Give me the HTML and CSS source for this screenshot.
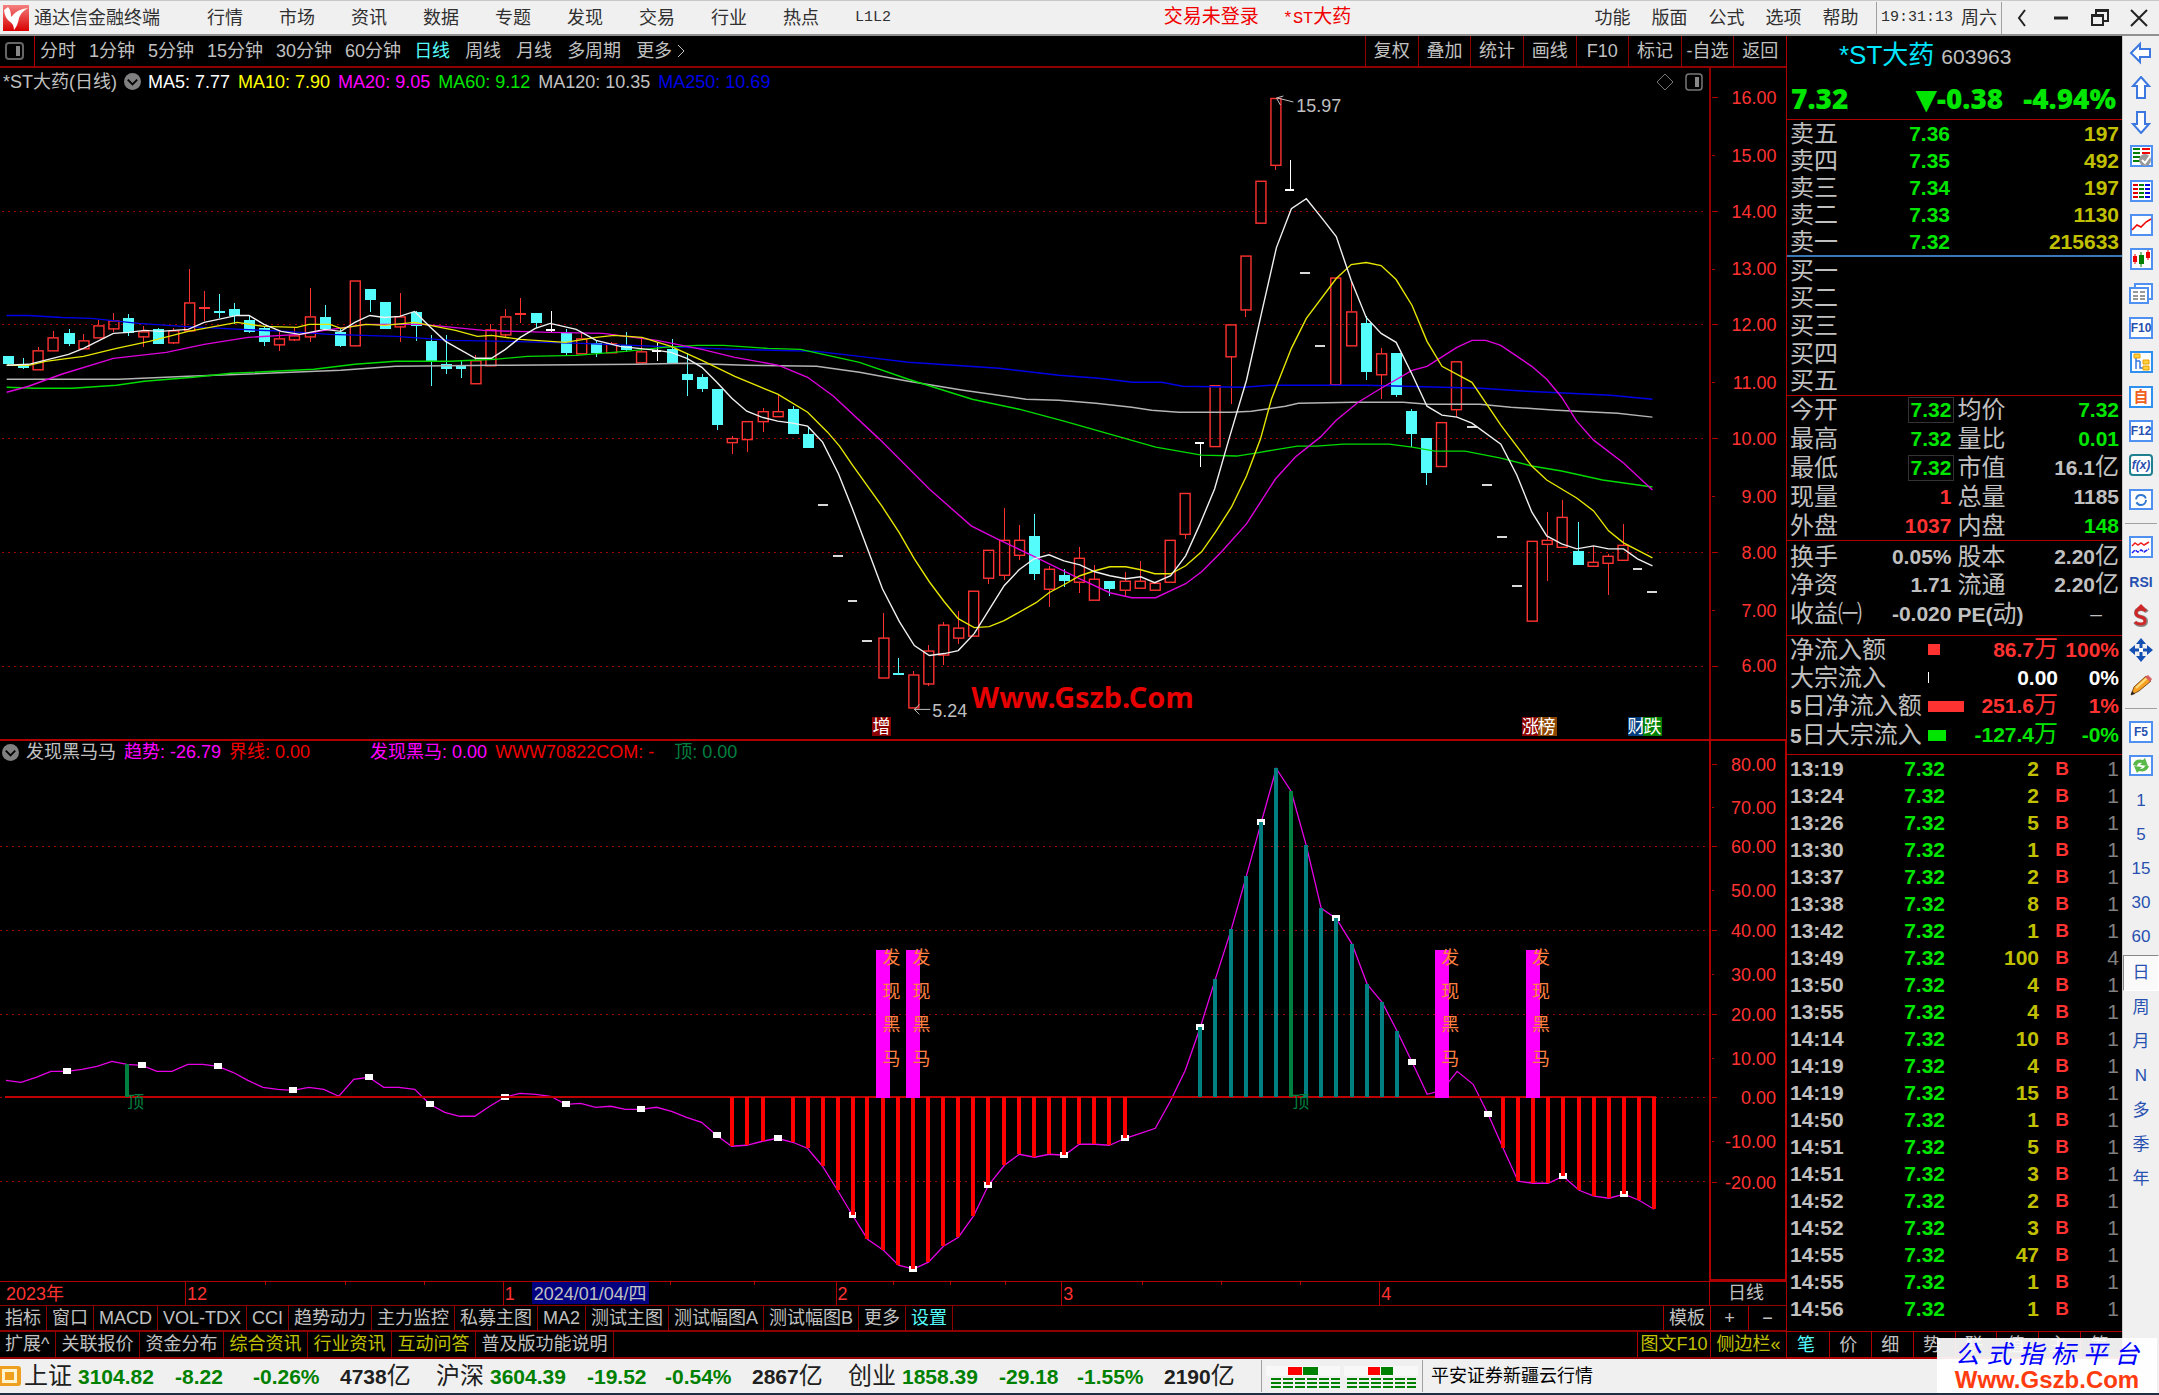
FILE: index.html
```html
<!DOCTYPE html>
<html lang="zh-CN">
<head>
<meta charset="utf-8">
<title>通达信金融终端</title>
<link rel="stylesheet" href="styles.css">
</head>
<body>
<header class="topbar">
  <svg class="logo" viewBox="0 0 26 26"><defs><linearGradient id="lg" x1="0" y1="0" x2="0" y2="1"><stop offset="0" stop-color="#f58080"/><stop offset="1" stop-color="#d80000"/></linearGradient></defs><rect width="26" height="26" fill="url(#lg)"/><path d="M1 5 L5 2 Q8 5 8 12 Q14 4 25 3 Q18 7 16 13 Q15 20 11 25 Q11 19 6 16 Q2 13 1 5 Z" fill="#fff"/></svg>
  <h1 class="app-name">通达信金融终端</h1>
  <nav class="menu">
    <button>行情</button><button>市场</button><button>资讯</button><button>数据</button><button>专题</button><button>发现</button><button>交易</button><button>行业</button><button>热点</button><button class="mono">L1L2</button>
  </nav>
  <div class="notice"><span>交易未登录</span><span><b class="mono">*ST</b>大药</span></div>
  <nav class="menu menu-right">
    <button>功能</button><button>版面</button><button>公式</button><button>选项</button><button>帮助</button>
  </nav>
  <div class="clock"><span class="mono">19:31:13</span><span>周六</span></div>
  <div class="window-buttons">
    <button aria-label="返回"><svg viewBox="0 0 20 20"><path d="M13 2 L7 10 L13 18" fill="none" stroke="#222" stroke-width="2"/></svg></button>
    <button aria-label="最小化"><svg viewBox="0 0 20 20"><path d="M3 10 H17" stroke="#222" stroke-width="3"/></svg></button>
    <button aria-label="还原"><svg viewBox="0 0 20 20"><path d="M2 7 H13 V17 H2 Z M6 7 V2 H18 V13 H13" fill="none" stroke="#222" stroke-width="2"/><path d="M6 3 H18 M2 8 H13" stroke="#222" stroke-width="2"/></svg></button>
    <button aria-label="关闭"><svg viewBox="0 0 20 20"><path d="M2 2 L18 18 M18 2 L2 18" stroke="#222" stroke-width="2"/></svg></button>
  </div>
</header>

<main class="workspace">
  <section class="charts">
    <div class="period-bar">
      <button class="panel-toggle" aria-label="面板"><svg viewBox="0 0 20 20"><rect x="1" y="2" width="17" height="16" rx="3" fill="none" stroke="#666" stroke-width="2"/><rect x="11" y="5" width="4" height="10" fill="#888"/></svg></button>
      <nav class="periods">
        <button>分时</button><button>1分钟</button><button>5分钟</button><button>15分钟</button><button>30分钟</button><button>60分钟</button>
      </nav>
      <nav class="periods long">
        <button class="on">日线</button><button>周线</button><button>月线</button><button>多周期</button><button class="more">更多<svg viewBox="0 0 10 14"><path d="M2 1 L8 7 L2 13" fill="none" stroke="#c0c0c0" stroke-width="1"/></svg></button>
      </nav>
      <nav class="tools">
        <button>复权</button><button>叠加</button><button>统计</button><button>画线</button><button>F10</button><button>标记</button><button>-自选</button><button>返回</button>
      </nav>
    </div>

    <div class="pane price-pane">
      <div class="plot">
        <div class="legend">
          <span>*ST大药(日线)</span>
          <svg class="drop" viewBox="0 0 18 18"><circle cx="9" cy="9" r="9" fill="#808080"/><path d="M4 7 L9 12 L14 7" fill="none" stroke="#000" stroke-width="2"/></svg>
          <span class="white">MA5: 7.77</span><span class="yellow">MA10: 7.90</span><span class="magenta">MA20: 9.05</span><span class="lime">MA60: 9.12</span><span>MA120: 10.35</span><span class="blue">MA250: 10.69</span>
          <span class="legend-icons">
            <svg viewBox="0 0 18 18"><path d="M9 1 L17 9 L9 17 L1 9 Z" fill="none" stroke="#777" stroke-width="1"/></svg>
            <svg viewBox="0 0 18 18"><rect x="1" y="1" width="16" height="16" rx="3" fill="none" stroke="#777" stroke-width="1.5"/><rect x="10" y="4" width="4" height="10" fill="#888"/></svg>
          </span>
        </div>
        <div class="canvas"><svg id="price-chart" viewBox="0 95 1710 646"></svg></div>
      </div>
      <div class="axis"><svg id="price-axis" viewBox="1712 68 74 673"></svg></div>
    </div>

    <div class="pane signal-pane">
      <div class="plot">
        <div class="legend small">
          <svg class="drop" viewBox="0 0 18 18"><circle cx="9" cy="9" r="9" fill="#808080"/><path d="M4 7 L9 12 L14 7" fill="none" stroke="#000" stroke-width="2"/></svg>
          <span>发现黑马马</span><span class="magenta">趋势: -26.79</span><span class="red first-gap">界线: 0.00</span><span class="magenta">发现黑马: 0.00</span><span class="red second-gap">WWW70822COM: -</span><span class="green">顶: 0.00</span>
        </div>
        <div class="canvas"><svg id="signal-chart" viewBox="0 765 1710 517"></svg></div>
      </div>
      <div class="axis boxed"><svg id="signal-axis" viewBox="1713 743 72 537"></svg></div>
    </div>

    <div class="date-row">
      <div class="dates"><svg id="date-axis" viewBox="0 1283 1710 23"></svg></div>
      <div class="date-unit">日线</div>
    </div>
    <div class="tab-row">
      <button>指标</button><button>窗口</button><button>MACD</button><button>VOL-TDX</button><button>CCI</button><button>趋势动力</button><button>主力监控</button><button>私募主图</button><button>MA2</button><button>测试主图</button><button>测试幅图A</button><button>测试幅图B</button><button>更多</button><button class="on">设置</button>
      <span class="row-end"><button class="w-template">模板</button><button class="w-zoom">+</button><button class="w-zoom">−</button></span>
    </div>
    <div class="tab-row last">
      <button>扩展^</button><button>关联报价</button><button>资金分布</button><button class="gold">综合资讯</button><button class="gold">行业资讯</button><button class="gold">互动问答</button><button>普及版功能说明</button>
      <span class="row-end"><button class="gold w-f10">图文F10</button><button class="gold w-side">侧边栏«</button></span>
    </div>
  </section>

  <aside class="quote">
    <h2 class="stock"><span>*ST大药</span><small>603963</small></h2>
    <div class="last-price"><b>7.32</b><b class="chg">▼-0.38</b><b>-4.94%</b></div>
    <table class="book asks">
      <tr><th>卖五</th><td>7.36</td><td class="vol">197</td></tr>
      <tr><th>卖四</th><td>7.35</td><td class="vol">492</td></tr>
      <tr><th>卖三</th><td>7.34</td><td class="vol">197</td></tr>
      <tr><th>卖二</th><td>7.33</td><td class="vol">1130</td></tr>
      <tr><th>卖一</th><td>7.32</td><td class="vol">215633</td></tr>
    </table>
    <table class="book bids">
      <tr><th>买一</th><td></td><td></td></tr>
      <tr><th>买二</th><td></td><td></td></tr>
      <tr><th>买三</th><td></td><td></td></tr>
      <tr><th>买四</th><td></td><td></td></tr>
      <tr><th>买五</th><td></td><td></td></tr>
    </table>
    <table class="stats">
      <tr><th>今开</th><td class="lime"><span class="boxed-num">7.32</span></td><th>均价</th><td class="lime">7.32</td></tr>
      <tr><th>最高</th><td class="lime">7.32</td><th>量比</th><td class="lime">0.01</td></tr>
      <tr><th>最低</th><td class="lime"><span class="boxed-num">7.32</span></td><th>市值</th><td>16.1<i>亿</i></td></tr>
      <tr><th>现量</th><td class="hot">1</td><th>总量</th><td>1185</td></tr>
      <tr><th>外盘</th><td class="hot">1037</td><th>内盘</th><td class="lime">148</td></tr>
    </table>
    <table class="stats fundamentals">
      <tr><th>换手</th><td>0.05%</td><th>股本</th><td>2.20<i>亿</i></td></tr>
      <tr><th>净资</th><td>1.71</td><th>流通</th><td>2.20<i>亿</i></td></tr>
      <tr><th>收益㈠</th><td>-0.020</td><th><b>PE(</b>动<b>)</b></th><td class="dash">–</td></tr>
    </table>
    <table class="flow">
      <tr class="hot"><th>净流入额</th><td><span class="bar w12"></span></td><td>86.7<i>万</i></td><td>100%</td></tr>
      <tr class="white"><th>大宗流入</th><td><span class="bar w1"></span></td><td>0.00</td><td>0%</td></tr>
      <tr class="hot"><th><b>5</b>日净流入额</th><td><span class="bar w36"></span></td><td>251.6<i>万</i></td><td>1%</td></tr>
      <tr class="lime"><th><b>5</b>日大宗流入</th><td><span class="bar w18"></span></td><td>-127.4<i>万</i></td><td>-0%</td></tr>
    </table>
    <div class="ticks-wrap">
    <table class="ticks">
      <tr><th>13:19</th><td>7.32</td><td>2</td><td>B</td><td>1</td></tr>
      <tr><th>13:24</th><td>7.32</td><td>2</td><td>B</td><td>1</td></tr>
      <tr><th>13:26</th><td>7.32</td><td>5</td><td>B</td><td>1</td></tr>
      <tr><th>13:30</th><td>7.32</td><td>1</td><td>B</td><td>1</td></tr>
      <tr><th>13:37</th><td>7.32</td><td>2</td><td>B</td><td>1</td></tr>
      <tr><th>13:38</th><td>7.32</td><td>8</td><td>B</td><td>1</td></tr>
      <tr><th>13:42</th><td>7.32</td><td>1</td><td>B</td><td>1</td></tr>
      <tr><th>13:49</th><td>7.32</td><td>100</td><td>B</td><td>4</td></tr>
      <tr><th>13:50</th><td>7.32</td><td>4</td><td>B</td><td>1</td></tr>
      <tr><th>13:55</th><td>7.32</td><td>4</td><td>B</td><td>1</td></tr>
      <tr><th>14:14</th><td>7.32</td><td>10</td><td>B</td><td>1</td></tr>
      <tr><th>14:19</th><td>7.32</td><td>4</td><td>B</td><td>1</td></tr>
      <tr><th>14:19</th><td>7.32</td><td>15</td><td>B</td><td>1</td></tr>
      <tr><th>14:50</th><td>7.32</td><td>1</td><td>B</td><td>1</td></tr>
      <tr><th>14:51</th><td>7.32</td><td>5</td><td>B</td><td>1</td></tr>
      <tr><th>14:51</th><td>7.32</td><td>3</td><td>B</td><td>1</td></tr>
      <tr><th>14:52</th><td>7.32</td><td>2</td><td>B</td><td>1</td></tr>
      <tr><th>14:52</th><td>7.32</td><td>3</td><td>B</td><td>1</td></tr>
      <tr><th>14:55</th><td>7.32</td><td>47</td><td>B</td><td>1</td></tr>
      <tr><th>14:55</th><td>7.32</td><td>1</td><td>B</td><td>1</td></tr>
      <tr><th>14:56</th><td>7.32</td><td>1</td><td>B</td><td>1</td></tr>
    </table>
    </div>
    <nav class="quote-tabs"><button class="on">笔</button><button>价</button><button>细</button><button>势</button><button>联</button><button>值</button><button>主</button><button>筹</button></nav>
  </aside>

  <nav class="sidebar">
    <div class="group g14">
      <button aria-label="后退"><svg viewBox="0 0 24 24"><path d="M2 12 L11 3 V8 H21 V16 H11 V21 Z" fill="#fff" stroke="#3c78e0" stroke-width="2"/></svg></button>
      <button aria-label="上"><svg viewBox="0 0 24 24"><path d="M12 1 L20 10 H16 V22 H8 V10 H4 Z" fill="#fff" stroke="#3c78e0" stroke-width="2"/></svg></button>
      <button aria-label="下"><svg viewBox="0 0 24 24"><path d="M12 23 L20 14 H16 V2 H8 V14 H4 Z" fill="#fff" stroke="#3c78e0" stroke-width="2"/></svg></button>
      <button aria-label="报价"><svg viewBox="0 0 24 24"><rect x="2" y="2" width="21" height="20" fill="#fff" stroke="#5090f0" stroke-width="2"/><path d="M4 5h7M4 9h7M4 13h7M4 17h7" stroke="#008000" stroke-width="2"/><path d="M13 5h8M13 9h8" stroke="#f00000" stroke-width="2"/><circle cx="16" cy="16" r="6" fill="#999"/><path d="M13 16l3 3l5-7" fill="none" stroke="#fff" stroke-width="2"/></svg></button>
      <button aria-label="列表"><svg viewBox="0 0 24 24"><rect x="2" y="2" width="21" height="20" fill="#fff" stroke="#5090f0" stroke-width="2"/><path d="M4 6h5M4 10h5M4 14h5M4 18h5" stroke="#e00000" stroke-width="2"/><path d="M10 6h5M10 10h5M10 14h5M10 18h5" stroke="#008000" stroke-width="2"/><path d="M16 6h5M16 10h5M16 14h5M16 18h5" stroke="#0000e0" stroke-width="2"/></svg></button>
      <button aria-label="分时图"><svg viewBox="0 0 24 24"><rect x="2" y="2" width="21" height="20" fill="#fff" stroke="#5090f0" stroke-width="2"/><path d="M3 17l5-5l4 2l5-5l5-3" fill="none" stroke="#f00000" stroke-width="1.5"/></svg></button>
      <button aria-label="K线"><svg viewBox="0 0 24 24"><rect x="2" y="2" width="21" height="20" fill="#fff" stroke="#5090f0" stroke-width="2"/><path d="M6 7v10M19 3v10" stroke="#f00000"/><path d="M12 5v15" stroke="#008000"/><path d="M4 9h4v6h-4zM17 5h4v6h-4z" fill="#f00000"/><path d="M10 8h5v9h-5z" fill="#008000"/></svg></button>
      <button aria-label="多窗"><svg viewBox="0 0 24 24"><path d="M6 6V2H23V17H19" fill="#fff" stroke="#5090f0" stroke-width="2"/><rect x="1" y="6" width="18" height="15" fill="#fff" stroke="#5090f0" stroke-width="2"/><path d="M4 10h5M11 10h5M4 14h5M11 14h5M4 17h5M11 17h5" stroke="#333"/></svg></button>
      <button class="key"><span>F10</span></button>
      <button aria-label="关联"><svg viewBox="0 0 24 24"><rect x="2" y="2" width="21" height="20" fill="#fff" stroke="#3090f0" stroke-width="2"/><path d="M7 8v11M7 11h4M11 11v7h4" fill="none" stroke="#3878e0" stroke-width="1.5"/><path d="M5 4h6v4H5zM14 10h6v4h-6zM14 16h6v4h-6z" fill="#ffd040" stroke="#e8a000"/></svg></button>
      <button class="key self"><span>自</span></button>
      <button class="key"><span>F12</span></button>
      <button class="key fx"><span>f(x)</span></button>
      <button aria-label="刷新"><svg viewBox="0 0 24 24"><rect x="1" y="2" width="22" height="19" fill="#fff" stroke="#5090f0" stroke-width="2"/><circle cx="12" cy="12" r="5" fill="none" stroke="#3078d0" stroke-width="2" stroke-dasharray="13 3"/></svg></button>
    </div>
    <hr>
    <div class="group g5">
      <button aria-label="指标"><svg viewBox="0 0 24 24"><rect x="1" y="2" width="22" height="20" fill="#fff" stroke="#5090f0" stroke-width="2"/><path d="M3 11l3-3l3 2l3-2l3 2l5-3" fill="none" stroke="#f02020" stroke-width="1.5"/><path d="M3 18l3-3l3 2l3-2l3 2l5-3" fill="none" stroke="#2020f0" stroke-width="1.5" stroke-dasharray="4 1"/></svg></button>
      <button class="rsi">RSI</button>
      <button class="dollar" aria-label="交易"><svg viewBox="0 0 24 24"><path d="M18 8Q16 5 12 5Q7 5 7 9Q7 12 12 13Q17 14 17 17Q17 21 12 21Q8 21 6 18" fill="none" stroke="#888" stroke-width="4"/><path d="M17 7Q15 5 12 5Q7 5 7 9Q7 12 12 13Q16 14 16 17Q16 20 11 20Q8 20 6 18" fill="none" stroke="#d02828" stroke-width="3"/><path d="M12 0l4 4h-8z" fill="#d02828"/></svg></button>
      <button aria-label="移动"><svg viewBox="0 0 24 24"><path d="M12 0l5 6H7zM12 24l5-6H7zM0 12l6-5v10zM24 12l-6-5v10z" fill="#1450b4"/><path d="M12 5v14M5 12h14" stroke="#1450b4" stroke-width="3"/><rect x="10" y="10" width="4" height="4" fill="#fff"/></svg></button>
      <button aria-label="画笔"><svg viewBox="0 0 24 24"><path d="M2 22l3-8L17 3l5 5L10 18z" fill="#f8a020" stroke="#805020"/><path d="M7 15L18 5" stroke="#ffe080" stroke-width="2"/><path d="M16 4l3-2l4 4l-2 3z" fill="#d86060"/><path d="M2 22l1-4l3 3z" fill="#222"/></svg></button>
    </div>
    <hr>
    <div class="group g14">
      <button class="key"><span>F5</span></button>
      <button aria-label="更新"><svg viewBox="0 0 24 24"><rect x="1" y="2" width="22" height="19" fill="#fff" stroke="#5090f0" stroke-width="2"/><path d="M4 11Q6 4 14 6L16 4L19 12L11 11L13 9Q9 8 8 12zM20 12Q18 19 10 17L8 19L5 12L13 13L11 15Q15 15 16 12z" fill="#58b848"/></svg></button>
      <button>1</button><button>5</button><button>15</button><button>30</button><button>60</button><button class="pressed">日</button><button>周</button><button>月</button><button>N</button><button>多</button><button>季</button><button>年</button>
    </div>
  </nav>
</main>

<footer class="status">
  <svg class="status-icon" viewBox="0 0 22 22"><rect x="-2" y="1" width="23" height="20" rx="3" fill="#f0a020"/><rect x="2" y="4" width="15" height="14" fill="#fff4d0"/><rect x="5" y="7" width="9" height="8" fill="#f0a020"/></svg>
  <div class="index"><span>上证</span><b>3104.82</b><b>-8.22</b><b>-0.26%</b><span class="amt"><b>4738</b>亿</span></div>
  <div class="index"><span>沪深</span><b>3604.39</b><b>-19.52</b><b>-0.54%</b><span class="amt"><b>2867</b>亿</span></div>
  <div class="index"><span>创业</span><b>1858.39</b><b>-29.18</b><b>-1.55%</b><span class="amt"><b>2190</b>亿</span></div>
  <div class="breadth">
    <svg viewBox="0 0 152 28"><g fill="#f8f8f8"><rect y="4" width="74" height="10"/><rect x="78" y="4" width="74" height="10"/></g><rect x="22" y="5" width="14" height="8" fill="#f00"/><rect x="37" y="5" width="15" height="8" fill="#008000"/><rect x="102" y="5" width="12" height="8" fill="#f00"/><rect x="115" y="5" width="12" height="8" fill="#008000"/><path d="M5 17H74M5 21H74M5 25H74M81 17H150M81 21H150M81 25H150" stroke="#008000" stroke-width="2" stroke-dasharray="10 2"/></svg>
  </div>
  <div class="broker">平安证券新疆云行情</div>
</footer>
<div class="badge"><span>公 式 指 标 平 台</span><strong>Www.Gszb.Com</strong></div>
<script src="chart.js"></script>
</body>
</html>
```
FILE: styles.css
```css
* { box-sizing: border-box; }
body {
  margin: 0; height: 100vh; display: flex; flex-direction: column; overflow: hidden;
  background: #000; color: #c0c0c0; border-bottom: 2px solid #1c2f45;
  font: 18px/24px "Liberation Sans", "Noto Sans CJK SC", sans-serif;
}
button { margin: 0; padding: 0; border: 0; background: none; color: inherit; font: inherit; white-space: nowrap; }
h1, h2 { margin: 0; font-weight: normal; }
svg { display: block; }
table { border-collapse: separate; border-spacing: 0; table-layout: fixed; width: 100%; }
th, td { padding: 0; font-weight: normal; text-align: right; white-space: nowrap; }
th { text-align: left; }
.mono { font-family: "Liberation Mono", monospace; font-size: 15px; font-weight: normal; }
.white { color: #fff; }
.yellow { color: #ff0; }
.magenta { color: #f0f; }
.lime { color: #00e600; }
.blue { color: #0000e6; }
.red { color: #f00000; }
.green { color: #008040; }
.hot { color: #ff3232; }
.gold { color: #c0c000; }
.on { color: #54fcfc; }

.topbar { height: 36px; flex: none; display: flex; align-items: center; background: #f0f0f0; color: #303030; border-top: 1px solid #c8c8c8; border-bottom: 2px solid #909090; }
.logo { width: 26px; height: 26px; margin-left: 3px; }
.app-name { margin-left: 5px; width: 155px; font-size: 18px; }
.menu { display: flex; }
.menu button { width: 72px; }
.menu-right button { width: 57px; }
.notice { flex: 1; display: flex; justify-content: center; align-items: baseline; gap: 24px; padding-left: 22px; color: #f00000; font-size: 19px; line-height: 26px; }
.notice .mono { font-size: 17px; }
.clock { display: flex; gap: 8px; align-items: center; height: 32px; margin-left: 7px; padding: 0 4px; border: 1px solid #a0a0a0; border-width: 0 1px; }
.window-buttons { display: flex; width: 157px; justify-content: space-around; }
.window-buttons svg { width: 20px; height: 20px; }

.workspace { flex: 1; min-height: 0; display: flex; }
.charts { flex: 1; min-width: 0; display: flex; flex-direction: column; border-right: 1px solid #b00000; }
.period-bar { flex: none; height: 32px; display: flex; border-bottom: 2px solid #900000; }
.panel-toggle { width: 35px; padding-left: 5px; border-right: 1px solid #b00000; }
.panel-toggle svg { width: 20px; height: 20px; }
.periods { display: flex; gap: 13px; padding-left: 5px; align-items: center; }
.periods.long { gap: 15px; padding-left: 13px; }
.more { display: flex; align-items: center; gap: 4px; }
.more svg { width: 10px; height: 14px; }
.tools { margin-left: auto; width: 421px; display: grid; grid-template-columns: repeat(8, 1fr); }
.tools button { border-left: 1px solid #900000; }

.pane { min-height: 0; display: flex; }
.price-pane { flex: 673 1 0; }
.signal-pane { flex: 541 1 0; border-top: 2px solid #b00000; }
.plot { flex: 1; min-width: 0; display: flex; flex-direction: column; }
.canvas { flex: 1; min-height: 0; }
.canvas svg, .axis svg, .dates svg { width: 100%; height: 100%; }
.legend { flex: none; height: 27px; display: flex; align-items: center; gap: 8px; padding-left: 3px; white-space: nowrap; }
.legend.small { height: 22px; line-height: 22px; padding-left: 3px; }
.legend .drop { width: 17px; height: 17px; margin: 0 -1px; }
.legend-icons { margin-left: auto; display: flex; gap: 11px; padding-right: 6px; }
.legend-icons svg { width: 18px; height: 18px; }
.first-gap { margin-right: 52px; }
.second-gap { margin-right: 12px; }
.axis { width: 77px; flex: none; border-left: 2px solid #900000; }
.axis.boxed { border: 2px solid #b00000; border-width: 0 1px 2px 2px; }

svg text { font: 18px "Liberation Sans", "Noto Sans CJK SC", sans-serif; fill: #c0c0c0; }
svg .scale { fill: #ff3232; text-anchor: end; }
svg .month { fill: #ff3232; }
svg .horse { fill: #ff8040; }
svg .peak { fill: #008040; font-size: 17px; }
svg .tag { fill: #fff; }
svg .site { font: bold 29px "Noto Sans", sans-serif; fill: #e60000; }

.date-row { flex: none; height: 25px; display: flex; border-top: 1px solid #b00000; border-bottom: 1px solid #900000; }
.dates { flex: 1; min-width: 0; }
.date-unit { width: 77px; padding-right: 4px; border-left: 1px solid #b00000; text-align: center; line-height: 23px; }
.tab-row { flex: none; height: 26px; display: flex; border-bottom: 2px solid #900000; line-height: 24px; }
.tab-row button { padding: 0 5px; border-right: 1px solid #900000; }
.tab-row.last { height: 27px; line-height: 25px; }
.tab-row.last > button { padding: 0 6px 0 5px; }
.tab-row .row-end { margin-left: auto; display: flex; }
.tab-row .row-end button { padding: 0; border-right: 0; border-left: 1px solid #b00000; }
.w-template { width: 47px; }
.w-zoom { width: 38px; }
.w-f10 { width: 73px; }
.w-side { width: 76px; }

.quote { width: 335px; flex: none; display: flex; flex-direction: column; font-size: 21px; font-weight: bold; }
.quote th { font-size: 24px; line-height: 26px; padding-left: 3px; }
.quote td { font-weight: bold; padding-right: 3px; line-height: 26px; }
.quote i { font-size: 24px; line-height: 20px; font-weight: normal; font-style: normal; }
.quote th b { font-size: 21px; }
.quote table { flex: none; }
.stock { height: 39px; display: flex; align-items: baseline; gap: 7px; padding-left: 52px; color: #00e6ff; font-size: 26px; line-height: 38px; }
.stock small { color: #c0c0c0; font-size: 21px; }
.last-price { height: 45px; display: flex; padding: 0 6px 0 4px; border-bottom: 1px solid #b00000; color: #00e600; font: bold 28px/46px "Noto Sans", "DejaVu Sans", sans-serif; }
.chg { margin-left: auto; padding-right: 20px; }
.book td { color: #00e600; }
.book td.vol { color: #c0c000; }
.book th { width: 90px; }
.book td:nth-child(2) { width: 76px; }
.book tr { height: 27px; }
.book.asks { border-bottom: 2px solid #3a78b8; }
.book.bids { border-bottom: 1px solid #b00000; height: 139px; }
.stats { height: 145px; border-bottom: 1px solid #b00000; }
.stats.fundamentals { height: 94px; padding-top: 2px; padding-bottom: 6px; border-bottom: 0; }
.stats th { width: 80px; }
.stats td { width: 86px; }
.boxed-num { display: inline-block; height: 26px; line-height: 24px; padding: 0 2px; margin-right: -3px; border: 1px solid #333; }
.stats .dash { padding-right: 20px; font-weight: normal; }
.flow { height: 120px; padding-bottom: 4px; border-top: 1px solid #b00000; border-bottom: 1px solid #b00000; }
.flow th { width: 141px; color: #c0c0c0; }
.flow td:nth-child(2) { width: 36px; padding: 0; text-align: left; }
.flow td:nth-child(3) { padding: 0; width: 94px; }
.bar { display: block; height: 11px; background: currentColor; }
.w1 { width: 1px; }
.w12 { width: 12px; }
.w18 { width: 18px; }
.w36 { width: 36px; }
.ticks-wrap { flex: 1; min-height: 0; overflow: hidden; }
.ticks tr { height: 27px; }
.ticks th { width: 80px; font-size: 21px; font-weight: bold; }
.ticks td:nth-child(2) { width: 78px; padding: 0; color: #00e600; }
.ticks td:nth-child(3) { width: 94px; padding: 0; color: #c0c000; }
.ticks td:nth-child(4) { width: 33px; color: #ff3232; font-weight: bold; font-size: 19px; }
.ticks td:nth-child(5) { color: #808080; font-weight: normal; }
.quote-tabs { flex: none; height: 28px; display: grid; grid-template-columns: repeat(8, 1fr); border-top: 1px solid #b00000; border-bottom: 2px solid #b00000; font-size: 18px; font-weight: normal; }
.quote-tabs button + button { border-left: 1px solid #b00000; }
.quote-tabs button { padding-right: 4px; }

.sidebar { width: 37px; flex: none; background: #f0f0f0; color: #2850b0; border-left: 1px solid #ccc; font-size: 17px; }
.group { display: flex; flex-direction: column; }
.group.g14 { height: 481px; }
.group.g5 { height: 172px; }
.group button { flex: 1; min-height: 0; display: flex; align-items: center; justify-content: center; }
.group svg { width: 24px; height: 24px; }
.sidebar hr { margin: 6px 2px; border: 0; border-top: 1px solid #a0a0a0; }
.key span { width: 24px; height: 22px; border: 2px solid #5090f0; background: #fff; font-size: 12px; font-weight: bold; line-height: 18px; display: flex; justify-content: center; }
.key.self span { color: #f06020; font-size: 15px; border-color: #3090f0; }
.key.fx span { border-color: #208090; border-radius: 4px; font-style: italic; }
.rsi { font-weight: bold; font-size: 14px; }
.sidebar .pressed { background: #fafafa; border: 1px solid #fff; border-top-color: #888; border-left-color: #888; }

.status { flex: none; height: 34px; display: flex; align-items: center; background: #f0f0f0; color: #202020; }
.status-icon { width: 22px; height: 22px; margin-right: 2px; }
.index { display: grid; grid-template-columns: 54px 97px 78px 87px 96px; align-items: baseline; font-size: 24px; line-height: 30px; white-space: nowrap; }
.index b { font-size: 21px; color: #008000; }
.index .amt b { color: #202020; }
.breadth { padding: 2px 4px; height: 32px; margin-left: 1px; border: 1px solid #a0a0a0; border-width: 0 1px; }
.breadth svg { width: 152px; height: 28px; }
.broker { padding-left: 8px; color: #000; }

.badge { position: absolute; right: 2px; bottom: 2px; width: 220px; height: 55px; padding-top: 1px; background: rgba(255, 255, 255, .92); text-align: center; white-space: nowrap; }
.badge span { display: block; color: #0000ff; font-size: 25px; font-style: italic; line-height: 30px; }
.badge strong { display: block; color: #ff3c10; font-size: 24px; line-height: 22px; }
```
FILE: chart.js
```js
const NS = 'http://www.w3.org/2000/svg';
const STEP = 15.13;
const xOf = i => Math.round(6 + STEP * i);

function add(parent, tag, attrs, text) {
  const el = document.createElementNS(NS, tag);
  for (const k in attrs) el.setAttribute(k, attrs[k]);
  if (text !== undefined) el.textContent = text;
  parent.appendChild(el);
  return el;
}
const rect = (p, x, y, w, h, fill) => add(p, 'rect', { x, y, width: w, height: h, fill, 'shape-rendering': 'crispEdges' });
const grid = (p, y) => add(p, 'line', { x1: 0, x2: 1710, y1: y + .5, y2: y + .5, stroke: '#a00000', 'stroke-dasharray': '2 4', 'shape-rendering': 'crispEdges' });

// kind, high, body top, body bottom, low; '-' is a day with a single price
const days = `c357,357,365,367 c359,365,369,370 r348,351,370,370 r332,338,351,351 c330,334,345,347 r335,341,349,350
r321,326,338,338 r314,321,329,333 c315,319,334,337 r327,332,337,348 c329,330,345,345 r329,331,343,345 r269,303,331,331
r292,308,310,322 c295,312,313,319 c304,310,317,325 c317,321,333,334 c328,329,343,347 r333,339,345,352 r328,336,340,342
r288,317,337,343 c306,318,330,330 c330,333,347,348 r281,281,346,346 c289,289,301,313 c303,303,330,330 r294,317,327,343
c312,313,327,342 c336,342,362,387 c336,365,370,375 c361,367,370,379 r356,361,384,384 r325,330,366,366 r310,317,335,339
r299,314,316,324 c314,314,324,329 w312,330,331,333 c330,334,354,356 r333,339,354,354 c341,344,354,358 r343,344,353,353
c333,346,351,353 r339,352,363,363 w344,351,352,362 c340,350,364,364 c354,375,381,397 c375,378,390,393 c390,390,426,431
r437,439,443,455 r422,422,440,453 r409,412,422,433 r396,412,417,417 c407,410,435,435 c428,435,449,449 -505 -556 -601 -641
r614,639,679,679 c659,674,676,676 r672,676,709,709 r646,652,685,688 r623,626,656,666 r612,629,639,645 r592,592,637,637
r551,551,579,585 r509,541,576,581 r526,541,556,561 c515,537,575,581 r567,570,590,608 c570,576,582,588 r548,559,583,594
r566,580,601,601 c582,582,590,597 r573,582,591,597 r562,582,589,589 r584,584,591,591 r541,541,583,583 r494,494,535,540
w443,443,444,468 r386,386,447,447 r325,325,357,405 r256,256,310,318 r181,181,223,223 r98,98,165,170 w160,189,190,190
-272 -346 r278,278,385,385 r282,312,346,346 c317,324,373,381 r349,354,375,400 c354,354,396,398 c410,412,435,448
c439,439,474,486 r423,423,467,467 r362,362,410,418 -427 -485 -537 -586 r542,542,622,622 r513,541,545,582 r501,518,548,548
c523,552,566,566 r547,563,567,567 r555,557,564,596 r525,546,561,561 -569 -592`.split(/\s+/);

const averages = {
  '#0000e6': '5,316 27,316 60,318 90,319 137,324 181,327 241,330 285,332 329,335 395,337 450,341 510,342 581,344 658,347 735,350 817,352 860,357 909,363 1000,369 1060,376 1100,379 1134,383 1163,383 1184,387 1245,388 1272,386 1368,386 1483,389 1529,392 1613,396 1655,400',
  '#b4b4b4': '5,380 118,380 187,377 241,375 340,371 395,367 494,366 636,365 686,364 746,366 817,367 860,373 909,382 964,391 1027,400 1060,401 1097,404 1133,408 1153,411 1180,413 1233,413 1253,412 1287,407 1300,404 1355,403 1405,403 1430,405 1482,405 1513,408 1559,411 1620,414 1655,418',
  '#00dc00': '5,388 33,389 71,389 115,386 143,382 192,378 230,374 313,370 354,365 395,362 450,362 494,360 527,357 576,356 625,352 664,348 697,346 724,346 768,349 801,350 860,363 909,380 973,400 1020,410 1065,422 1111,435 1157,448 1203,456 1238,457 1257,454 1299,447 1318,447 1345,445 1391,445 1414,448 1437,452 1467,452 1503,459 1534,467 1564,472 1605,481 1655,488',
  '#dc00dc': '5,393 27,387 60,375 112,359 165,353 203,345 247,338 299,335 324,331 365,325 422,325 483,331 550,333 603,334 657,341 702,350 735,358 779,366 808,378 834,397 880,440 930,490 972,527 1000,541 1040,560 1081,580 1111,594 1133,599 1157,599 1187,585 1203,573 1223,553 1248,525 1277,480 1297,458 1322,438 1338,421 1360,403 1383,389 1414,371 1429,367 1459,348 1474,341 1488,341 1503,346 1534,367 1549,380 1564,398 1579,422 1596,441 1626,464 1655,491',
  '#e6e600': '5,366 27,366 44,362 82,357 115,349 148,342 187,332 236,323 263,327 296,328 308,325 329,325 340,329 365,325 384,326 414,323 455,331 477,337 491,336 520,340 565,343 596,338 614,336 642,338 671,347 702,361 735,377 778,395 808,413 828,433 840,447 853,466 883,508 900,534 915,560 930,583 945,603 959,620 975,629 990,628 1005,622 1037,604 1050,594 1065,586 1081,577 1096,572 1111,568 1127,568 1142,571 1156,575 1172,575 1187,567 1203,553 1217,533 1233,508 1248,477 1262,440 1273,400 1278,387 1293,349 1308,319 1338,279 1353,265 1368,263 1383,266 1398,280 1414,306 1429,342 1444,367 1474,383 1503,426 1534,467 1549,481 1579,499 1596,512 1611,532 1626,544 1655,559',
  '#f0f0f0': '5,366 27,365 67,355 82,349 112,334 127,333 143,331 159,332 187,330 203,323 236,316 248,316 263,325 280,332 299,335 324,330 340,332 354,323 369,316 384,318 399,317 414,312 429,327 445,342 475,359 491,359 505,350 520,338 535,329 550,324 576,330 596,341 620,347 657,351 671,353 687,359 702,368 717,383 732,399 747,412 762,418 778,422 793,424 808,427 823,443 839,475 853,510 868,550 883,590 900,623 915,647 930,657 945,655 959,652 975,635 990,611 1005,587 1020,571 1035,560 1050,556 1065,562 1081,566 1096,573 1111,577 1127,580 1142,578 1156,584 1172,577 1187,557 1201,526 1216,490 1231,438 1248,381 1263,314 1278,248 1293,209 1308,199 1324,219 1338,237 1353,281 1368,318 1383,334 1398,343 1414,375 1429,407 1444,416 1459,418 1474,424 1503,445 1519,476 1534,513 1549,537 1564,545 1579,550 1596,547 1611,550 1626,550 1640,560 1655,567'
};

function priceChart() {
  const s = document.getElementById('price-chart');
  [211, 325, 439, 553, 667].forEach(y => grid(s, y));
  days.forEach((d, i) => {
    const x = xOf(i), kind = d[0], v = d.slice(1).split(',').map(Number);
    if (kind === '-') { rect(s, x - 5, v[0], 10, 2, '#d8d8d8'); return; }
    const [hi, top, bot, lo] = v;
    const color = { c: '#54fcfc', r: '#ff3232', w: '#ffffff' }[kind];
    const h = Math.max(bot - top, 2);
    if (top > hi) rect(s, x, hi, 1, top - hi, color);
    if (lo > bot) rect(s, x, bot, 1, lo - bot, color);
    if (kind === 'r' && h > 3) add(s, 'rect', { x: x - 4.5, y: top + .5, width: 10, height: h, fill: 'none', stroke: color, 'stroke-width': 1.4 });
    else rect(s, x - 5, top, kind === 'w' ? 9 : 11, h, color);
  });
  for (const c in averages) add(s, 'polyline', { points: averages[c], fill: 'none', stroke: c, 'stroke-width': 1.4 });
  add(s, 'path', { d: 'M1295 102 L1279 98 M1285 96 L1278 98 L1282 105 M931 711 H915 M920 706 L915 711 L920 716', fill: 'none', stroke: '#c0c0c0' });
  add(s, 'text', { x: 1298, y: 112 }, '15.97');
  add(s, 'text', { x: 933, y: 719 }, '5.24');
  add(s, 'text', { x: 972, y: 710, class: 'site' }, 'Www.Gszb.Com');
  [[873, '#8c0000', '增'], [1630, '#003c80', '财'], [1524, '#8c0000', '涨'], [1540, '#8c4600', '榜'], [1646, '#008000', '跌']].forEach(([x, c, t]) => {
    rect(s, x, 719, 19, 19, c);
    add(s, 'text', { x: x, y: 735, class: 'tag' }, t);
  });
  const a = document.getElementById('price-axis');
  for (let p = 16; p >= 6; p--) {
    const y = 97 + (16 - p) * 57 + (p % 2 ? 1 : 0);
    rect(a, 1712, y, p % 2 ? 3 : 6, 1, '#b00000');
    add(a, 'text', { x: 1777, y: y + 7, class: 'scale' }, p.toFixed(2));
  }
}

const trend = [1082,1084,1079,1073,1073,1071,1068,1063,1066,1067,1073,1073,1066,1066,1068,1074,1082,1089,1091,1092,1089,1091,1098,1081,1079,1089,1089,1091,1106,1114,1118,1118,1108,1099,1095,1096,1098,1106,1105,1109,1108,1111,1111,1109,1113,1119,1124,1137,1148,1147,1143,1140,1144,1150,1168,1192,1217,1241,1252,1267,1271,1264,1248,1239,1218,1187,1167,1156,1159,1156,1157,1146,1146,1147,1140,1135,1130,1103,1072,1029,981,931,878,824,770,793,847,910,920,946,986,1004,1033,1064,1096,1092,1073,1086,1116,1150,1183,1185,1185,1178,1192,1198,1200,1196,1202,1211];
const ZERO = 1099;

function signalChart() {
  const s = document.getElementById('signal-chart');
  [848, 932, 1016, ZERO, 1183].forEach(y => grid(s, y));
  add(s, 'polyline', { points: trend.map((y, i) => xOf(i) + ',' + y).join(' '), fill: 'none', stroke: '#e600e6', 'stroke-width': 1.3 });
  [4, 9, 14, 19, 24, 28, 33, 37, 42, 47, 51, 56, 60, 65, 70, 74, 79, 83, 88, 93, 98, 103, 107].forEach(i => rect(s, xOf(i) - 4, trend[i] - 3, 8, 6, '#fff'));
  rect(s, 5, ZERO - 1, 1652, 2, '#c00000');
  trend.forEach((y, i) => {
    const x = xOf(i) - 2;
    if ((i >= 48 && i <= 74 && i !== 51) || i >= 99) rect(s, x, ZERO, 4, y - ZERO, '#f00');
    if (i >= 79 && i <= 92) rect(s, x, y, 4, ZERO - y, i === 85 ? '#008040' : '#008080');
    if (i === 8) rect(s, x, y, 4, ZERO - y, '#008040');
  });
  [58, 60, 95, 101].forEach(i => {
    rect(s, xOf(i) - 7, 952, 14, 148, '#f0f');
    [...'发现黑马'].forEach((c, n) => add(s, 'text', { x: xOf(i) - 1, y: 966 + Math.round(n * 33.5), class: 'horse' }, c));
  });
  [127, 1293].forEach(x => add(s, 'text', { x, y: 1110, class: 'peak' }, '顶'));
  const a = document.getElementById('signal-axis');
  [766, 809, 848, 892, 932, 976, 1016, 1060, 1099, 1143, 1183].forEach((y, n) => {
    rect(a, 1713, y, n % 2 ? 2 : 5, 1, '#b00000');
    add(a, 'text', { x: 1777, y: y + 7, class: 'scale' }, (80 - n * 10).toFixed(2));
  });
}

function dateAxis() {
  const s = document.getElementById('date-axis');
  [265, 345, 424, 670, 754, 894, 951, 1006, 1143, 1222, 1301].forEach(x => rect(s, x, 1283, 1, 3, '#b00000'));
  [[6, '2023年'], [187, '12'], [505, '1'], [838, '2'], [1064, '3'], [1382, '4']].forEach(([x, t], n) => {
    if (n) rect(s, x - 2, 1283, 1, 23, '#b00000');
    add(s, 'text', { x, y: 1301, class: 'month' }, t);
  });
  rect(s, 532, 1283, 117, 22, '#000080');
  add(s, 'text', { x: 534, y: 1301 }, '2024/01/04/四');
}

priceChart();
signalChart();
dateAxis();
```
